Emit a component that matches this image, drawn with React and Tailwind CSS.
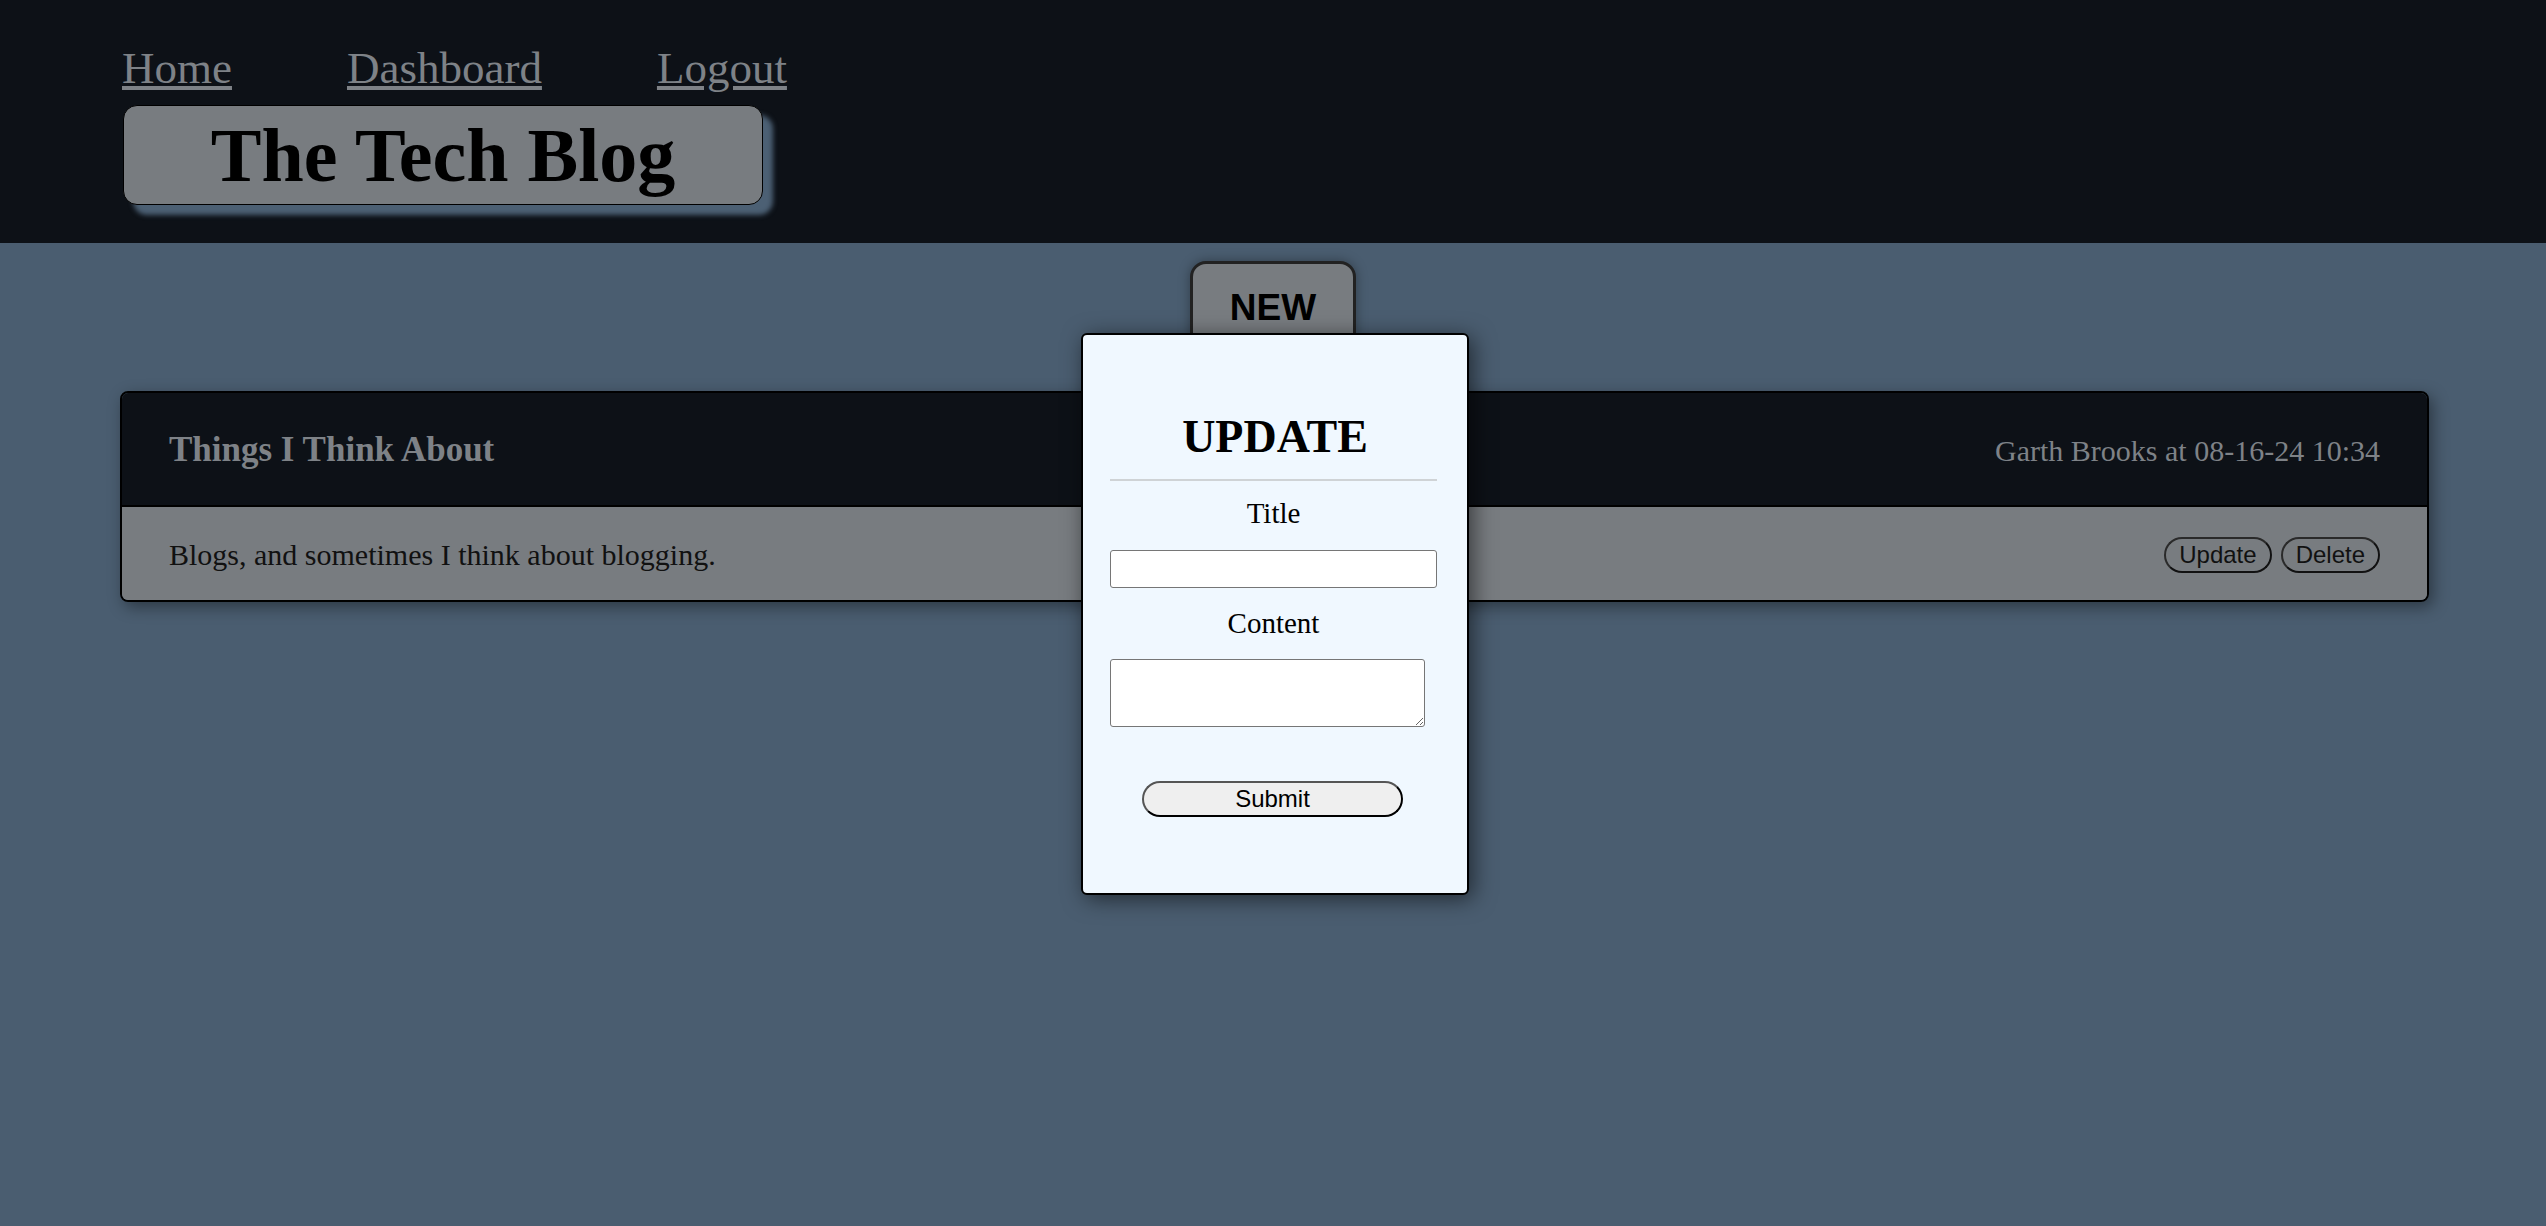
import React, { useState } from "react";

const serif = "font-['Liberation_Serif','Times_New_Roman',serif]";
const sans = "font-['Liberation_Sans',Arial,sans-serif]";

const posts = [
  {
    id: 1,
    title: "Things I Think About",
    author: "Garth Brooks",
    date: "08-16-24 10:34",
    body: "Blogs, and sometimes I think about blogging.",
  },
];

const UpdateModal = () => {
  const [title, setTitle] = useState("");
  const [content, setContent] = useState("");

  return (
    <div className="absolute top-[333px] left-[1081px] w-[388px] h-[562px] bg-[#f0f8ff] border-2 border-black rounded-md shadow-[4px_4px_22px_rgba(0,0,0,0.55)] px-[27px] pt-[75px] flex flex-col text-center">
      <h2 className={`${serif} text-[46px] leading-[53px] font-bold text-black`}>
        UPDATE
      </h2>
      <div className="mt-[16px] h-[2px] w-[327px] bg-[#cfd3d6]" />

      <form onSubmit={(e) => e.preventDefault()} className="flex flex-col">
        {/* Title */}
        <label className={`${serif} mt-[16px] w-[327px] text-[29px] leading-[33px] text-black`}>
          Title
        </label>
        <input
          value={title}
          onChange={(e) => setTitle(e.target.value)}
          className="mt-[20px] h-[38px] w-[327px] bg-white border border-[#767676] rounded-[3px]"
        />

        {/* Content */}
        <label className={`${serif} mt-[19px] w-[327px] text-[29px] leading-[33px] text-black`}>
          Content
        </label>
        <textarea
          value={content}
          onChange={(e) => setContent(e.target.value)}
          className="mt-[19px] h-[68px] w-[315px] bg-white border border-[#767676] rounded-[3px]"
        />

        <button
          type="submit"
          className={`${sans} mt-[54px] ml-[32px] w-[261px] h-[36px] rounded-full bg-[#efefef] border-[2.5px] border-[#555] border-r-black border-b-black text-[24px] leading-none text-black`}
        >
          Submit
        </button>
      </form>
    </div>
  );
};

const PostCard = ({ post }) => (
  <div className="ml-[120px] mr-[117px] mt-[50px] border-2 border-black rounded-lg overflow-hidden shadow-[4px_5px_16px_rgba(0,0,0,0.4)]">
    <div className="h-[112px] bg-[#0d1117] px-[47px] pt-[3px] flex items-center justify-between">
      <h3 className={`${serif} text-[35px] font-bold text-[#7e8287]`}>
        {post.title}
      </h3>
      <span className={`${serif} text-[30px] text-[#7e8287]`}>
        {post.author} at {post.date}
      </span>
    </div>
    <div className="h-[95px] bg-[#787c80] border-t-2 border-black px-[47px] pt-[2px] flex items-center justify-between">
      <p className={`${serif} text-[30px] text-[#111]`}>{post.body}</p>
      <div className={`${sans} flex gap-[9px]`}>
        <button className="h-[36px] px-[13px] rounded-full border-[2.5px] border-[#2a2a2a] border-r-[#111] border-b-[#111] text-[24px] leading-none text-[#111]">
          Update
        </button>
        <button className="h-[36px] px-[13px] rounded-full border-[2.5px] border-[#2a2a2a] border-r-[#111] border-b-[#111] text-[24px] leading-none text-[#111]">
          Delete
        </button>
      </div>
    </div>
  </div>
);

export default function App() {
  return (
    <div className="relative min-h-screen bg-[#4a5d70]">
      {/* Header */}
      <header className="h-[243px] bg-[#0d1117] pl-[122px] pt-[42px]">
        <nav className={`${serif} flex gap-[115px] text-[45px] leading-[52px]`}>
          <a href="#" className="text-[#7e8287] underline">Home</a>
          <a href="#" className="text-[#7e8287] underline">Dashboard</a>
          <a href="#" className="text-[#7e8287] underline">Logout</a>
        </nav>
        <div className="mt-[11px] ml-px w-[640px] h-[100px] rounded-[14px] border border-black bg-[#787c80] shadow-[10px_10px_5px_#4c6074] flex items-center justify-center">
          <h1 className={`${serif} text-[76px] font-bold text-black leading-none`}>
            The Tech Blog
          </h1>
        </div>
      </header>

      {/* Main */}
      <main className="flex flex-col">
        <button
          className={`${sans} mt-[18px] self-center w-[166px] h-[80px] rounded-t-[16px] bg-[#787c80] border-[3px] border-[#222] pt-[23px] text-[37px] font-bold leading-[42px] text-black shadow-[0_0_12px_rgba(0,0,0,0.35)] flex justify-center items-start`}
        >
          NEW
        </button>

        {posts.map((post) => (
          <PostCard key={post.id} post={post} />
        ))}
      </main>

      <UpdateModal />
    </div>
  );
}
